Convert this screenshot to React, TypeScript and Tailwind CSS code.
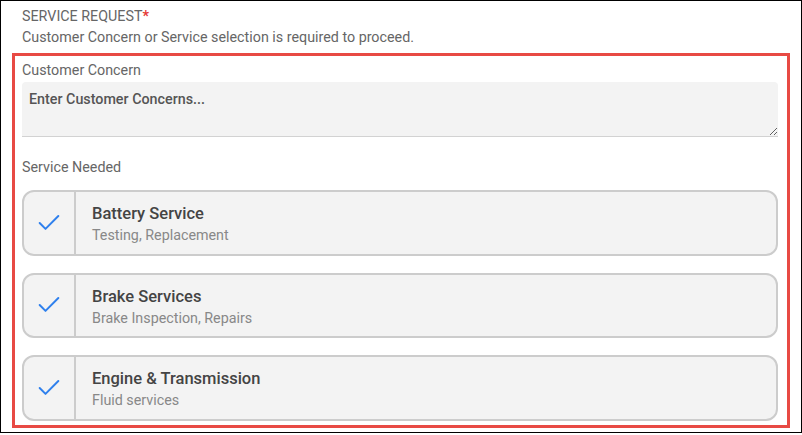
import React from "react";

const services = [
  { title: "Battery Service", sub: "Testing, Replacement" },
  { title: "Brake Services", sub: "Brake Inspection, Repairs" },
  { title: "Engine & Transmission", sub: "Fluid services" },
];

function CheckIcon() {
  return (
    <svg width="28" height="28" viewBox="0 0 24 24" fill="none" stroke="#2f80ed" strokeWidth="1.7" strokeLinecap="round" strokeLinejoin="round">
      <path d="M20 6 9 17l-5-5" />
    </svg>
  );
}

export default function App() {
  return (
    <div className="w-[802px] h-[435px] bg-white" style={{ fontFamily: "Roboto, 'Liberation Sans', sans-serif" }}>
      <div className="w-[802px] h-[433px] border border-black px-[11px] flex flex-col">
        <div className="pl-[10px] pt-[5px] text-[14.3px] leading-[20px] text-[#666]">
          <div>
            SERVICE REQUEST<span className="text-[#e53935] font-bold">*</span>
          </div>
          <div className="mt-[1px]">Customer Concern or Service selection is required to proceed.</div>
        </div>
        <div className="mt-[6px] border-[3px] border-[#e84a44] pl-[7px] pr-[9px] pt-[4px] flex flex-col h-[375px]">
          <div className="text-[14.3px] leading-[20px] text-[#666]">Customer Concern</div>
          <textarea
            className="mt-[2px] h-[55px] w-full bg-[#f3f3f3] border-b border-[#d2d2d2] rounded-[4px] rounded-b-none px-[7px] pt-[7px] text-[14.3px] leading-[20px] text-[#444] font-medium placeholder:text-[#555] placeholder:font-medium outline-none"
            placeholder="Enter Customer Concerns..."
          />
          <div className="mt-[20px] text-[14.3px] leading-[20px] text-[#666]">Service Needed</div>
          <div className="mt-[13px] flex flex-col gap-[17px]">
            {services.map((s) => (
              <div key={s.title} className="h-[65.5px] flex border-2 border-[#cccccc] rounded-[12px] bg-[#f3f3f3]">
                <div className="w-[52px] border-r-2 border-[#cccccc] flex items-center justify-center">
                  <CheckIcon />
                </div>
                <div className="pl-[16px] pt-[10px] flex flex-col">
                  <div className="text-[16.5px] leading-[24px] font-medium text-[#444]">{s.title}</div>
                  <div className="text-[14.3px] leading-[19px] text-[#888]">{s.sub}</div>
                </div>
              </div>
            ))}
          </div>
        </div>
      </div>
    </div>
  );
}
